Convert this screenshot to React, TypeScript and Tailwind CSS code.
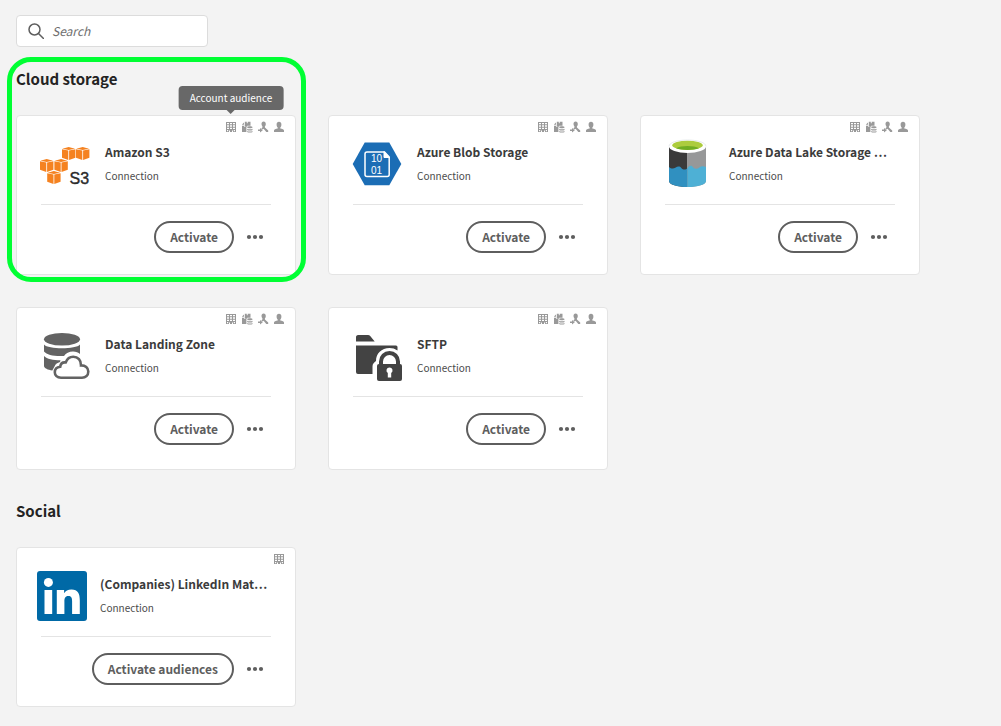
import type { ReactNode } from "react";

function AccountIcon() {
  return (
    <svg className="block" width="12" height="12" viewBox="0 0 12 12" aria-hidden="true">
      <path
        fill="#999999"
        fillRule="evenodd"
        d="M1 1h10v10H8V9.500H7V11H5V9.500H4V11H1zM2 2v1.300h2V2zM5 2v1.300h2V2zM8 2v1.300h2V2zM2 4.300v1.400h2V4.300zM5 4.300v1.400h2V4.300zM8 4.300v1.400h2V4.300zM2 6.700V8h2V6.700zM5 6.700V8h2V6.700zM8 6.700V8h2V6.700zM2 9v1.200h1.200V9zM8.800 9v1.200H10V9z"
      />
    </svg>
  );
}

function ProspectIcon() {
  return (
    <svg className="block" width="12" height="12" viewBox="0 0 12 12" fill="#999999" aria-hidden="true">
      <path d="M3.800.8h2v1.400h.9V.8h2.800v4H6.200v.9H3.800zM1 3.400 3 1.400v2.400H1zM1 4.800h2.200v1.300h2.200V11H1z" />
      <path d="M6.200 6.200c0-1.200 5.300-1.200 5.300 0v.4c0 1-5.300 1-5.300 0zM6.200 7.800c1 .7 4.300.7 5.300 0v1.100c-.8.8-4.500.8-5.300 0zM6.200 10c1 .7 4.300.7 5.300 0v.9c-.8.900-4.500.9-5.300 0z" />
    </svg>
  );
}

function ConnectedPersonIcon() {
  return (
    <svg className="block" width="12" height="12" viewBox="0 0 12 12" fill="#999999" aria-hidden="true">
      <path d="M6.600.5c1.500 0 2.200 1 2.200 2.400 0 1-.4 1.900-.9 2.400v1.100l3.300 3V11H9.300L6.600 7.800 5.500 8.600 4.300 7.700 5.400 6.400V5.300c-.6-.6-.9-1.400-.9-2.400C4.500 1.500 5.200.5 6.600.5z" />
      <path d="M1 8.500h2V7l2.800 2.300L3 11.500V10H1z" />
    </svg>
  );
}

function PersonIcon() {
  return (
    <svg className="block" width="12" height="12" viewBox="0 0 12 12" fill="#999999" aria-hidden="true">
      <path d="M6 .8c1.500 0 2.400 1.100 2.400 2.700 0 1.200-.4 2.300-1.100 3v.9c1.900.3 3.700.9 3.700 2.200V11H1V9.600c0-1.300 1.800-1.900 3.700-2.200v-.9C4 5.800 3.600 4.700 3.600 3.500 3.600 1.900 4.500.8 6 .8z" />
    </svg>
  );
}

function Cube({ x, y }: { x: number; y: number }) {
  return (
    <g transform={`translate(${x} ${y})`} fill="#f58220">
      <path d="M.4 1.700 6.700 0 13 1.700 6.700 3z" />
      <path d="M0 2.300 6.300 3.600V13L0 10.800zM7.100 3.600 13.400 2.300V10.800L7.100 13z" />
    </g>
  );
}

function AmazonS3Logo() {
  return (
    <svg width="50" height="50" viewBox="0 0 50 50" aria-hidden="true">
      <Cube x={22} y={8} />
      <Cube x={36} y={8} />
      <Cube x={0} y={20} />
      <Cube x={14.4} y={20} />
      <Cube x={7.200} y={32} />
      <text x="29.500" y="44.500" fontSize="16" fill="#2b2b2b" stroke="#2b2b2b" strokeWidth=".4" fontFamily="Liberation Sans, sans-serif">S3</text>
    </svg>
  );
}

function AzureBlobLogo() {
  return (
    <svg width="50" height="50" viewBox="0 0 50 50" aria-hidden="true">
      <path d="M12.700 3.500h24.600L49.300 25 37.300 46.300H12.700L.7 25z" fill="#1b6db5" />
      <path d="M15 13h17.500l4.700 5v17.500a2 2 0 0 1-2 2H15a2 2 0 0 1-2-2V15a2 2 0 0 1 2-2z" fill="none" stroke="#fff" strokeWidth="1.500" />
      <path d="M32 12.500v6h5.500z" fill="#fff" stroke="#fff" />
      <g fill="#fff" fontSize="10" fontFamily="Liberation Sans, sans-serif" textAnchor="middle">
        <text x="24.500" y="23">10</text>
        <text x="24.500" y="35">01</text>
      </g>
    </svg>
  );
}

function DataLakeLogo() {
  return (
    <svg width="50" height="50" viewBox="0 0 50 50" aria-hidden="true">
      <path d="M5 8h18.500v40C13 48 5 45.500 5 42z" fill="#3a3a3a" />
      <path d="M23.500 8H42v34c0 3.500-8 6-18.500 6z" fill="#979899" />
      <path d="M5 28c2 2 4.500 2 6.300.8 2.500-1.700 4.500-1.700 6 .2 1.800 2 4.500 2 6.200 0v19C13 48 5 45.500 5 42z" fill="#3090c0" />
      <path d="M23.500 29c2-2 3.500-3.200 5.500-.8 2 2 4.500 2 6.300.2 2-1.800 4.300-1.400 6.700-.4v14c0 3.500-8 6-18.500 6z" fill="#4eb0d5" />
      <ellipse cx="23.500" cy="7.500" rx="18.500" ry="6.500" fill="#fff" />
      <path d="M5 7.500C5 3.500 13 1 23.500 1S42 3.500 42 7.500" fill="none" stroke="#cfd4d8" strokeWidth=".5" />
      <ellipse cx="23.500" cy="6.300" rx="15.200" ry="4.600" fill="#accc3d" />
      <path d="M12 9.300c5-3 18-3 23 0-5 2.200-18 2.200-23 0z" fill="#70ad22" />
    </svg>
  );
}

function LandingZoneLogo() {
  return (
    <svg width="50" height="50" viewBox="0 0 50 50" fill="#636363" aria-hidden="true">
      <ellipse cx="22" cy="8.300" rx="18" ry="6.300" />
      <path d="M4 13.500C8 18.500 36 18.500 40 13.500V23c-1.500-1.500-4-2.500-7-2.500-4 0-7 1.500-9 4.500C14 25.500 7 24 4 20.500z" />
      <path d="M4 25c3 3 9 4.300 16.500 4.300l-.5 1.700c-2.500.7-4.500 2-5.500 4.500L12.300 39.500C8 39 4 37 4 35z" />
      <path d="M21 46.700c-4 0-6.200-2.300-6.200-5.400 0-3 2-5.200 5.400-5.600.5-3 2.700-4.700 5.500-4.300 1.500-3.800 4.200-5.600 7.500-5.600 4.800 0 8 3.600 7.800 8.600 4.300-.1 7.300 2.500 7.300 6.200 0 3.800-2.700 6.100-6.300 6.100z" fill="#fff" stroke="#636363" strokeWidth="2.600" />
    </svg>
  );
}

function SftpLogo() {
  return (
    <svg width="50" height="50" viewBox="0 0 50 50" fill="#434343" aria-hidden="true">
      <path d="M4 10.500V6.500A2.300 2.300 0 0 1 6.300 4H16c1 0 1.700.4 2.200 1l4.500 5.500z" />
      <path d="M4 14.500h40a1.500 1.500 0 0 1 1.500 1.500v3.500c-2.500-1.700-5-2.500-8-2.500-8 0-13.500 5.500-13.500 13-2.200 1.500-3.500 3-3.500 5.500v7.500H6A2 2 0 0 1 4 41z" />
      <path d="M29 34v-3.500a8.500 8.500 0 0 1 17 0V34" fill="none" stroke="#434343" strokeWidth="4" />
      <path d="M27 33h21a2 2 0 0 1 2 2v13a2 2 0 0 1-2 2H27a2 2 0 0 1-2-2V35a2 2 0 0 1 2-2z" />
      <path d="M37.500 36.500a3 3 0 0 1 1.700 5.500v4.500h-3.400V42a3 3 0 0 1 1.700-5.500z" fill="#fff" />
    </svg>
  );
}

function LinkedInLogo() {
  return (
    <svg width="50" height="50" viewBox="0 0 50 50" aria-hidden="true">
      <rect width="50" height="50" rx="3" fill="#0069a6" />
      <g fill="#fff">
        <circle cx="11.400" cy="11.400" r="4.500" />
        <path d="M7.500 19h7.700v24H7.500zM19.800 19h7.300v3.300c1.200-2.200 3.900-3.900 7.400-3.900 6.500 0 8.300 4.300 8.300 10.800V43h-7.700V30.800c0-3.300-.3-5.900-3.700-5.900-3.500 0-4 2.700-4 5.700V43h-7.600z" />
      </g>
    </svg>
  );
}

type Destination = {
  name: string;
  logo: ReactNode;
  action: string;
  accountOnly?: boolean;
  tooltip?: string;
  highlighted?: boolean;
};

const cloudStorage: Destination[] = [
  { name: "Amazon S3", logo: <AmazonS3Logo />, action: "Activate", tooltip: "Account audience", highlighted: true },
  { name: "Azure Blob Storage", logo: <AzureBlobLogo />, action: "Activate" },
  { name: "Azure Data Lake Storage …", logo: <DataLakeLogo />, action: "Activate" },
  { name: "Data Landing Zone", logo: <LandingZoneLogo />, action: "Activate" },
  { name: "SFTP", logo: <SftpLogo />, action: "Activate" },
];

const social: Destination[] = [
  { name: "(Companies) LinkedIn Mat…", logo: <LinkedInLogo />, action: "Activate audiences", accountOnly: true },
];

function DestinationCard({ item }: { item: Destination }) {
  return (
    <article className="relative rounded border border-[#e4e4e4] bg-white pt-[5px] pb-[21px]">
      <div className="flex h-[12px] justify-end gap-1 pr-[10px]">
        <span className="relative">
          <AccountIcon />
          {item.tooltip && (
            <span role="tooltip" className="absolute bottom-[23px] left-1/2 -translate-x-1/2 rounded bg-[#686868] px-[11px] py-1 text-[10px] leading-4 whitespace-nowrap text-white">
              {item.tooltip}
              <span className="absolute top-full left-1/2 -translate-x-1/2 border-x-4 border-t-4 border-x-transparent border-t-[#686868]" />
            </span>
          )}
        </span>
        {!item.accountOnly && (
          <>
            <ProspectIcon />
            <ConnectedPersonIcon />
            <PersonIcon />
          </>
        )}
      </div>
      <div className={item.accountOnly ? "mt-[6px] flex gap-[13px] pl-5" : "mt-[6px] flex gap-[15px] pl-[23px]"}>
        {item.logo}
        <div className="pt-[3px]">
          <h3 className="text-[12px] leading-5 font-bold whitespace-nowrap text-[#3b3b3b]">{item.name}</h3>
          <p className="mt-1 text-[10px] leading-5 text-[#4b4b4b]">Connection</p>
        </div>
      </div>
      <div className="mx-6 mt-[15px] flex items-center justify-end gap-3 border-t border-[#e4e4e4] pt-4 pr-[7px]">
        <button className="h-8 rounded-full border-2 border-[#5e5e5e] px-[14px] text-[12px] leading-5 font-bold text-[#5e5e5e]">
          {item.action}
        </button>
        <button aria-label="More actions" className="flex h-8 items-center">
          <svg width="18" height="6" viewBox="0 0 18 6" fill="#5e5e5e" aria-hidden="true">
            <circle cx="3" cy="3" r="2.100" />
            <circle cx="9" cy="3" r="2.100" />
            <circle cx="15" cy="3" r="2.100" />
          </svg>
        </button>
      </div>
      {item.highlighted && (
        <div className="pointer-events-none absolute -top-[59px] -right-[11px] -bottom-[8px] -left-[10px] rounded-[24px] border-[5px] border-[#00ff33]" />
      )}
    </article>
  );
}

export default function App() {
  return (
    <main className="min-h-screen bg-[#f3f3f3] px-4 pt-[15px] pb-5 font-['Noto_Sans_CJK_SC','Open_Sans',sans-serif]">
      <label className="flex h-8 w-48 items-center gap-2 rounded border border-[#dcdcdc] bg-white pl-[11px]">
        <svg width="16" height="16" viewBox="0 0 16 16" fill="none" stroke="#5e5e5e" strokeWidth="1.500" aria-hidden="true">
          <circle cx="6.500" cy="6.500" r="5.500" />
          <path d="m10.500 10.500 5 5" strokeLinecap="round" />
        </svg>
        <input aria-label="Search" placeholder="Search" className="w-36 text-[12px] leading-5 italic outline-none placeholder:text-[#6e6e6e]" />
      </label>
      <section className="mt-5">
        <h2 className="text-[15px] leading-6 font-bold text-[#232323]">Cloud storage</h2>
        <div className="mt-6 grid grid-cols-[repeat(auto-fill,280px)] grid-rows-[auto_minmax(163px,auto)] gap-8">
          {cloudStorage.map((item) => (
            <DestinationCard key={item.name} item={item} />
          ))}
        </div>
      </section>
      <section className="mt-[29px]">
        <h2 className="text-[15px] leading-6 font-bold text-[#232323]">Social</h2>
        <div className="mt-6 grid grid-cols-[repeat(auto-fill,280px)] gap-8">
          {social.map((item) => (
            <DestinationCard key={item.name} item={item} />
          ))}
        </div>
      </section>
    </main>
  );
}
